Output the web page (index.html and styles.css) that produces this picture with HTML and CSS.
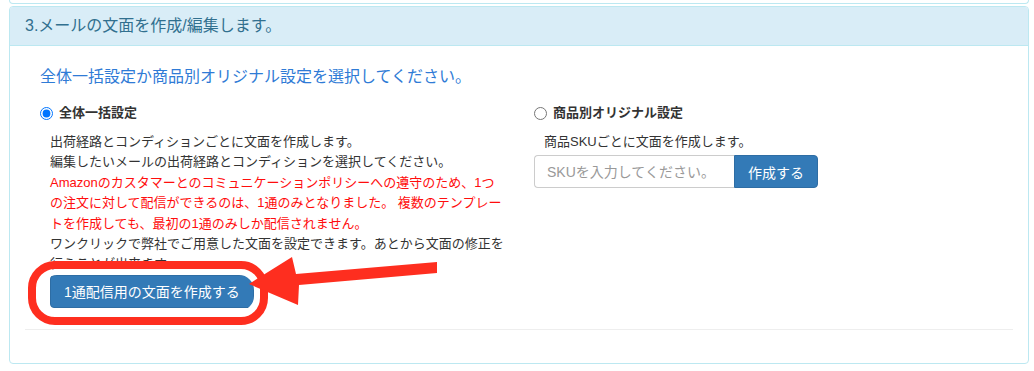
FILE: index.html
```html
<!DOCTYPE html>
<html lang="ja">
<head>
    <meta charset="UTF-8">
    <meta name="viewport" content="width=device-width, initial-scale=1.0">
    <title>メール文面設定</title>
    <link rel="stylesheet" href="styles.css">
</head>
<body>
<div class="wrap">
    <div class="prev-panel"></div>

    <div class="panel">
        <div class="panel-heading">3.メールの文面を作成/編集します。</div>
        <div class="panel-body">
            <p class="lead">全体一括設定か商品別オリジナル設定を選択してください。</p>
            <div class="row">
                <div class="col">
                    <label class="radio-label"><input type="radio" name="mode" checked> 全体一括設定</label>
                    <div class="desc">
                        出荷経路とコンディションごとに文面を作成します。<br>
                        編集したいメールの出荷経路とコンディションを選択してください。<br>
                        <span class="warn">Amazonのカスタマーとのコミュニケーションポリシーへの遵守のため、1つの注文に対して配信ができるのは、1通のみとなりました。 複数のテンプレートを作成しても、最初の1通のみしか配信されません。</span><br>
                        ワンクリックで弊社でご用意した文面を設定できます。あとから文面の修正を行うことが出来ます。
                    </div>
                    <button class="btn btn-one" type="button">1通配信用の文面を作成する</button>
                </div>
                <div class="col">
                    <label class="radio-label"><input type="radio" name="mode"> 商品別オリジナル設定</label>
                    <div class="desc desc-sku">商品SKUごとに文面を作成します。</div>
                    <div class="input-group">
                        <input type="text" class="sku-input" placeholder="SKUを入力してください。">
                        <button class="btn btn-sku" type="button">作成する</button>
                    </div>
                </div>
            </div>
            <hr>
        </div>
    </div>

    <!-- annotation drawn on top of the screenshot -->
    <svg class="annot" width="1034" height="371" viewBox="0 0 1034 371">
        <rect x="39" y="272" width="218" height="42" rx="18" fill="none" stroke="#fff" stroke-width="6"/>
        <rect x="32" y="265" width="232" height="56" rx="23" fill="none" stroke="#fe2e1f" stroke-width="8"/>
        <polygon fill="#fe2e1f" points="249,284 292,257 296,274 437,262 437,273 299,285 298,305"/>
    </svg>
</div>
</body>
</html>
```

FILE: styles.css
```css
body {
  margin: 0;
  padding: 0;
  font-family: "Liberation Sans", "Noto Sans CJK JP", sans-serif;
  font-size: 13px;
  color: #333;
  background: #fff;
}

.wrap {
  position: relative;
  padding: 0 5px 0 9px;
}

.prev-panel {
  height: 3px;
  border: 1px solid #bce8f1;
  border-top: none;
  border-radius: 0 0 4px 4px;
  margin-bottom: 2px;
}

.panel {
  border: 1px solid #bce8f1;
  border-radius: 4px;
}

.panel-heading {
  background: #d9edf7;
  color: #31708f;
  padding: 10px 15px;
  font-size: 16px;
  line-height: 18px;
  border-bottom: 1px solid #bce8f1;
  border-radius: 3px 3px 0 0;
}

.panel-body {
  padding: 15px 15px 15px;
}

.lead {
  margin: 5px 15px 0;
  font-size: 16px;
  line-height: 22px;
  color: #2f7bd6;
}

.row {
  display: grid;
  grid-template-columns: 1fr 1fr;
  margin-top: 15px;
}

.col {
  padding: 0 15px;
}

.radio-label {
  display: flex;
  align-items: center;
  gap: 6px;
  font-weight: bold;
  line-height: 20px;
}

.radio-label input {
  width: 13px;
  height: 13px;
  margin: 0;
}

.desc {
  margin: 9px 0 0 10px;
  line-height: 20.4px;
}

.warn {
  color: #ff0d0d;
}

.btn {
  height: 33px;
  padding: 0 13px;
  font-family: inherit;
  font-size: 14px;
  color: #fff;
  background: #337ab7;
  border: 1px solid #2e6da4;
  border-radius: 4px;
  cursor: pointer;
}

.btn-one {
  margin-left: 10px;
  display: block;
}

.input-group {
  display: flex;
  margin-top: 3px;
}

.sku-input {
  width: 200px;
  height: 33px;
  box-sizing: border-box;
  padding: 0 12px;
  font-family: inherit;
  font-size: 14px;
  border: 1px solid #ccc;
  border-right: none;
  border-radius: 4px 0 0 4px;
}

.sku-input::placeholder {
  color: #999;
}

.btn-sku {
  border-radius: 0 4px 4px 0;
}

hr {
  margin: 21px 0 18px;
  border: 0;
  border-top: 1px solid #eee;
}

.annot {
  position: absolute;
  top: 0;
  left: 0;
  pointer-events: none;
}
```
